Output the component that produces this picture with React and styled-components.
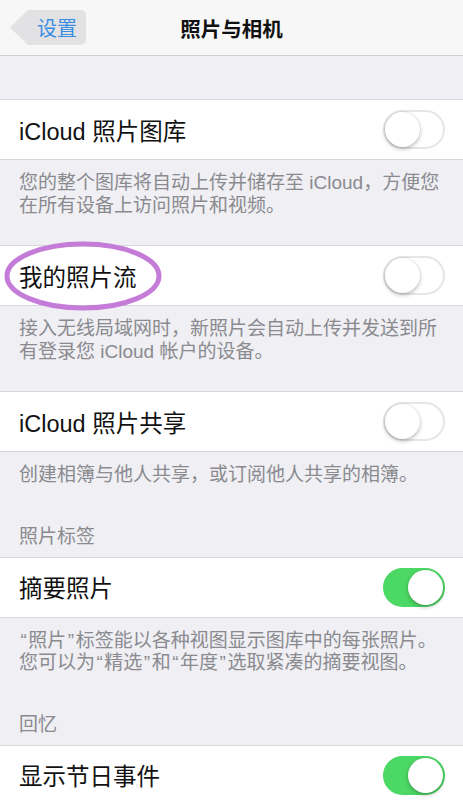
import React from 'react'
import styled, {createGlobalStyle} from 'styled-components'

const sections = [
  {
    rows: [{title: "iCloud 照片图库", on: false}],
    footer: "您的整个图库将自动上传并储存至 iCloud，方便您在所有设备上访问照片和视频。",
  },
  {
    rows: [{title: "我的照片流", on: false, circled: true}],
    footer: "接入无线局域网时，新照片会自动上传并发送到所有登录您 iCloud 帐户的设备。",
  },
  {
    rows: [{title: "iCloud 照片共享", on: false}],
    footer: "创建相簿与他人共享，或订阅他人共享的相簿。",
  },
  {
    header: "照片标签",
    rows: [{title: "摘要照片", on: true}],
    footer: "“照片”标签能以各种视图显示图库中的每张照片。您可以为“精选”和“年度”选取紧凑的摘要视图。",
  },
  {
    header: "回忆",
    rows: [{title: "显示节日事件", on: true}],
  },
]

// curly quotes get a little extra room around them
const withQuotes = text =>
  text.split(/([“”])/).map((part, i) =>
    part === "“" || part === "”" ? <Quote key={i}>{part}</Quote> : part
  )

const Switch = ({on}) => (
  <Track on={on}>
    <Knob on={on} />
  </Track>
)

const Ring = () => (
  <RingSvg width="164" height="74" viewBox="0 0 164 74">
    <ellipse cx="82" cy="37" rx="76" ry="32" fill="none" stroke="#c57cd8" strokeWidth="5" />
  </RingSvg>
)

export default function App() {
  return (
    <>
      <GlobalStyle />
      <Page>
        <NavBar>
          <BackCell>
            <Back>设置</Back>
          </BackCell>
          <Title>照片与相机</Title>
          <span />
        </NavBar>
        <TopGap />
        {sections.map((s, i) => (
          <React.Fragment key={i}>
            {s.header && <Header>{s.header}</Header>}
            <Group>
              {s.rows.map(r => (
                <Row key={r.title}>
                  <Label>{r.title}</Label>
                  {r.circled && <Ring />}
                  <Switch on={r.on} />
                </Row>
              ))}
            </Group>
            {s.footer && <Footer>{withQuotes(s.footer)}</Footer>}
          </React.Fragment>
        ))}
      </Page>
    </>
  )
}

const GlobalStyle = createGlobalStyle`
  body {
    margin: 0;
    background: #efeff4;
    font-family: "Liberation Sans", "Noto Sans CJK SC", sans-serif;
  }
`

const Page = styled.div`
  width: 463px;
  overflow: hidden;
`

const NavBar = styled.div`
  display: grid;
  grid-template-columns: 1fr auto 1fr;
  align-items: center;
  height: 55px;
  background: #f7f7f7;
  border-bottom: 1px solid #cfcfd3;
`

const BackCell = styled.div`
  padding-left: 10px;
`

const Back = styled.span`
  display: inline-flex;
  align-items: center;
  height: 35px;
  padding: 0 9px 0 27px;
  background: #e2e2e4;
  border-radius: 0 5px 5px 0;
  clip-path: polygon(18px 0, 100% 0, 100% 100%, 18px 100%, 0 50%);
  color: #3b8ee0;
  font-size: 20px;
`

const Title = styled.div`
  font-size: 20.5px;
  font-weight: 600;
  color: #111;
`

const TopGap = styled.div`
  height: 43px;
`

const Header = styled.div`
  padding: 11px 19px 9px;
  font-size: 19px;
  line-height: 22px;
  color: #8a8a8f;
`

const Group = styled.div`
  background: #fff;
  border-top: 1px solid #d8d8dc;
  border-bottom: 1px solid #d8d8dc;
`

const Row = styled.div`
  position: relative;
  display: flex;
  align-items: center;
  justify-content: space-between;
  height: 59px;
  padding: 0 18px 0 19px;
`

const Label = styled.span`
  font-size: 23.5px;
  color: #111;
`

const RingSvg = styled.svg`
  position: absolute;
  left: 1px;
  top: -7px;
  pointer-events: none;
`

const Track = styled.div`
  position: relative;
  box-sizing: border-box;
  width: 62px;
  height: 39px;
  border-radius: 20px;
  background: ${({on}) => on ? "#4cd864" : "#fff"};
  border: 2px solid ${({on}) => on ? "#4cd864" : "#e6e6e6"};
`

const Knob = styled.div`
  position: absolute;
  top: 0;
  left: ${({on}) => on ? "23px" : "0"};
  width: 35px;
  height: 35px;
  border-radius: 50%;
  background: #fff;
  box-shadow: 0 2px 4px rgba(0, 0, 0, 0.25), 0 0 0 0.5px rgba(0, 0, 0, 0.08);
`

const Footer = styled.div`
  padding: 12px 19px 28px;
  font-size: 19px;
  line-height: 22.5px;
  color: #8a8a8f;
`

const Quote = styled.span`
  padding: 0 1.5px;
`
